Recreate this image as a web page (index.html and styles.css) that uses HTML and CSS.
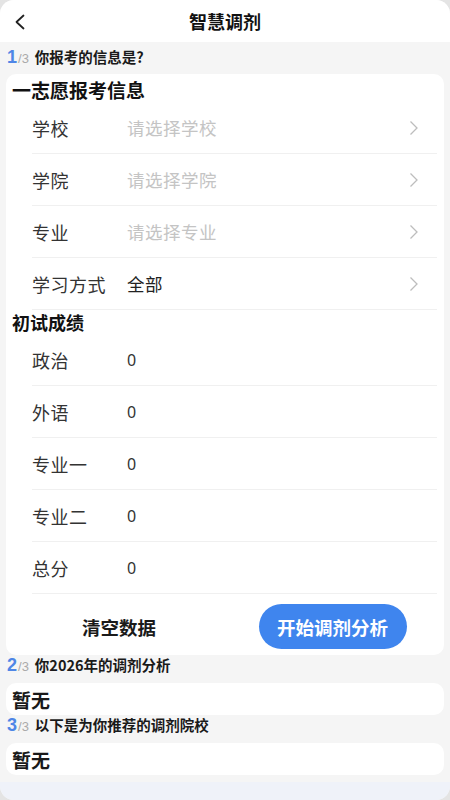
FILE: index.html
```html
<!DOCTYPE html>
<html lang="zh">
<head>
<meta charset="utf-8">
<meta name="viewport" content="width=device-width, initial-scale=1">
<title>智慧调剂</title>
<link rel="stylesheet" href="styles.css">
</head>
<body>
<div class="screen">
  <header class="topbar">
    <span class="back">
      <svg width="12" height="16" viewBox="0 0 12 16"><path d="M9.5 1.5 L2.5 8 L9.5 14.5" fill="none" stroke="#222" stroke-width="1.8" stroke-linecap="round" stroke-linejoin="round"/></svg>
    </span>
    <h1 class="title">智慧调剂</h1>
  </header>

  <main class="content">
    <div class="step"><span class="step-num">1</span><span class="step-total">/3</span><span class="step-text">你报考的信息是?</span></div>
    <section class="card">
      <h2 class="card-title">一志愿报考信息</h2>
      <div class="row"><span class="label">学校</span><span class="value placeholder">请选择学校</span><span class="chev"><svg width="10" height="16" viewBox="0 0 10 16"><path d="M1.5 1.5 L8 8 L1.5 14.5" fill="none" stroke="#bdbdbd" stroke-width="1.3"/></svg></span></div>
      <div class="row"><span class="label">学院</span><span class="value placeholder">请选择学院</span><span class="chev"><svg width="10" height="16" viewBox="0 0 10 16"><path d="M1.5 1.5 L8 8 L1.5 14.5" fill="none" stroke="#bdbdbd" stroke-width="1.3"/></svg></span></div>
      <div class="row"><span class="label">专业</span><span class="value placeholder">请选择专业</span><span class="chev"><svg width="10" height="16" viewBox="0 0 10 16"><path d="M1.5 1.5 L8 8 L1.5 14.5" fill="none" stroke="#bdbdbd" stroke-width="1.3"/></svg></span></div>
      <div class="row"><span class="label">学习方式</span><span class="value">全部</span><span class="chev"><svg width="10" height="16" viewBox="0 0 10 16"><path d="M1.5 1.5 L8 8 L1.5 14.5" fill="none" stroke="#bdbdbd" stroke-width="1.3"/></svg></span></div>

      <h3 class="sub-title">初试成绩</h3>
      <div class="row"><span class="label">政治</span><span class="value num">0</span></div>
      <div class="row"><span class="label">外语</span><span class="value num">0</span></div>
      <div class="row"><span class="label">专业一</span><span class="value num">0</span></div>
      <div class="row"><span class="label">专业二</span><span class="value num">0</span></div>
      <div class="row"><span class="label">总分</span><span class="value num">0</span></div>

      <div class="actions">
        <div class="action"><button class="btn-clear">清空数据</button></div>
        <div class="action"><button class="btn-start">开始调剂分析</button></div>
      </div>
    </section>

    <div class="step"><span class="step-num">2</span><span class="step-total">/3</span><span class="step-text">你2026年的调剂分析</span></div>
    <section class="card small"><span class="empty">暂无</span></section>

    <div class="step"><span class="step-num">3</span><span class="step-total">/3</span><span class="step-text">以下是为你推荐的调剂院校</span></div>
    <section class="card small"><span class="empty">暂无</span></section>
  </main>
  <div class="footer"></div>
</div>
</body>
</html>
```

FILE: styles.css
```css
* { box-sizing: border-box; }
html, body {
  margin: 0;
  padding: 0;
  background: #e4e4e4;
}
body {
  font-family: "Noto Sans CJK SC", "Noto Sans", sans-serif;
  color: #222;
}
.screen {
  width: 450px;
  height: 800px;
  background: #f5f5f5;
  border-radius: 14px;
  overflow: hidden;
  display: flex;
  flex-direction: column;
}
.topbar {
  height: 42px;
  background: #fff;
  display: flex;
  align-items: center;
  justify-content: center;
  position: relative;
  flex-shrink: 0;
}
.back {
  position: absolute;
  left: 14px;
  top: 14px;
  display: flex;
}
.title {
  margin: 0;
  font-size: 18px;
  font-weight: 700;
  color: #111;
  line-height: 22px;
}
.content {
  flex: 1;
  display: flex;
  flex-direction: column;
  padding: 0 6px;
}
.step {
  height: 20px;
  margin-top: 5px;
  margin-bottom: 7px;
  display: flex;
  align-items: baseline;
  line-height: 20px;
  padding-left: 1px;
}
.card + .step { margin-top: 0; margin-bottom: 8px; }
.step-num {
  font-size: 18px;
  font-weight: 700;
  color: #4f86e6;
  font-family: "Liberation Sans", Arial, sans-serif;
}
.step-total {
  font-size: 13px;
  color: #aaa;
  font-family: "Liberation Sans", Arial, sans-serif;
  margin-left: 1px;
  margin-right: 6px;
}
.step-text {
  font-size: 14.5px;
  font-weight: 700;
  color: #1a1a1a;
}
.card {
  background: #fff;
  border-radius: 10px;
  padding: 4px 7px 6px 6px;
}
.card-title {
  margin: 0;
  font-size: 19px;
  font-weight: 700;
  line-height: 24px;
  color: #111;
}
.sub-title {
  margin: 0;
  font-size: 18px;
  font-weight: 700;
  line-height: 24px;
  color: #111;
}
.row {
  height: 52px;
  margin-left: 20px;
  border-bottom: 1px solid #f0f0f0;
  display: flex;
  align-items: center;
}
.label {
  width: 95px;
  font-size: 18px;
  letter-spacing: 0.5px;
  color: #333;
}
.value {
  flex: 1;
  font-size: 17.5px;
  letter-spacing: 0.5px;
  color: #222;
}
.value.placeholder { color: #c4c4c4; }
.value.num {
  font-family: "Noto Sans", sans-serif;
  font-size: 16px;
  color: #333;
}
.chev {
  width: 10px;
  margin-right: 18px;
  display: flex;
}
.actions {
  display: flex;
  padding-top: 10px;
  margin-left: -6px;
  margin-right: -7px;
}
.action {
  flex: 1;
  display: flex;
  justify-content: center;
}
.btn-clear {
  border: none;
  background: transparent;
  font-family: inherit;
  font-size: 18.5px;
  font-weight: 700;
  color: #1a1a1a;
  height: 45px;
  padding: 0;
  margin-left: 7px;
}
.btn-start {
  border: none;
  background: #3f85ee;
  color: #fff;
  font-family: inherit;
  font-size: 18.5px;
  font-weight: 700;
  width: 148px;
  height: 45px;
  padding: 0;
  border-radius: 23px;
  margin-left: -4px;
}
.card.small {
  height: 32px;
  padding: 0 6px;
  display: flex;
  align-items: center;
}
.empty {
  font-size: 19px;
  font-weight: 700;
  color: #1a1a1a;
}
.footer {
  margin-top: auto;
  height: 18px;
  background: #eff2f9;
  flex-shrink: 0;
}
```
